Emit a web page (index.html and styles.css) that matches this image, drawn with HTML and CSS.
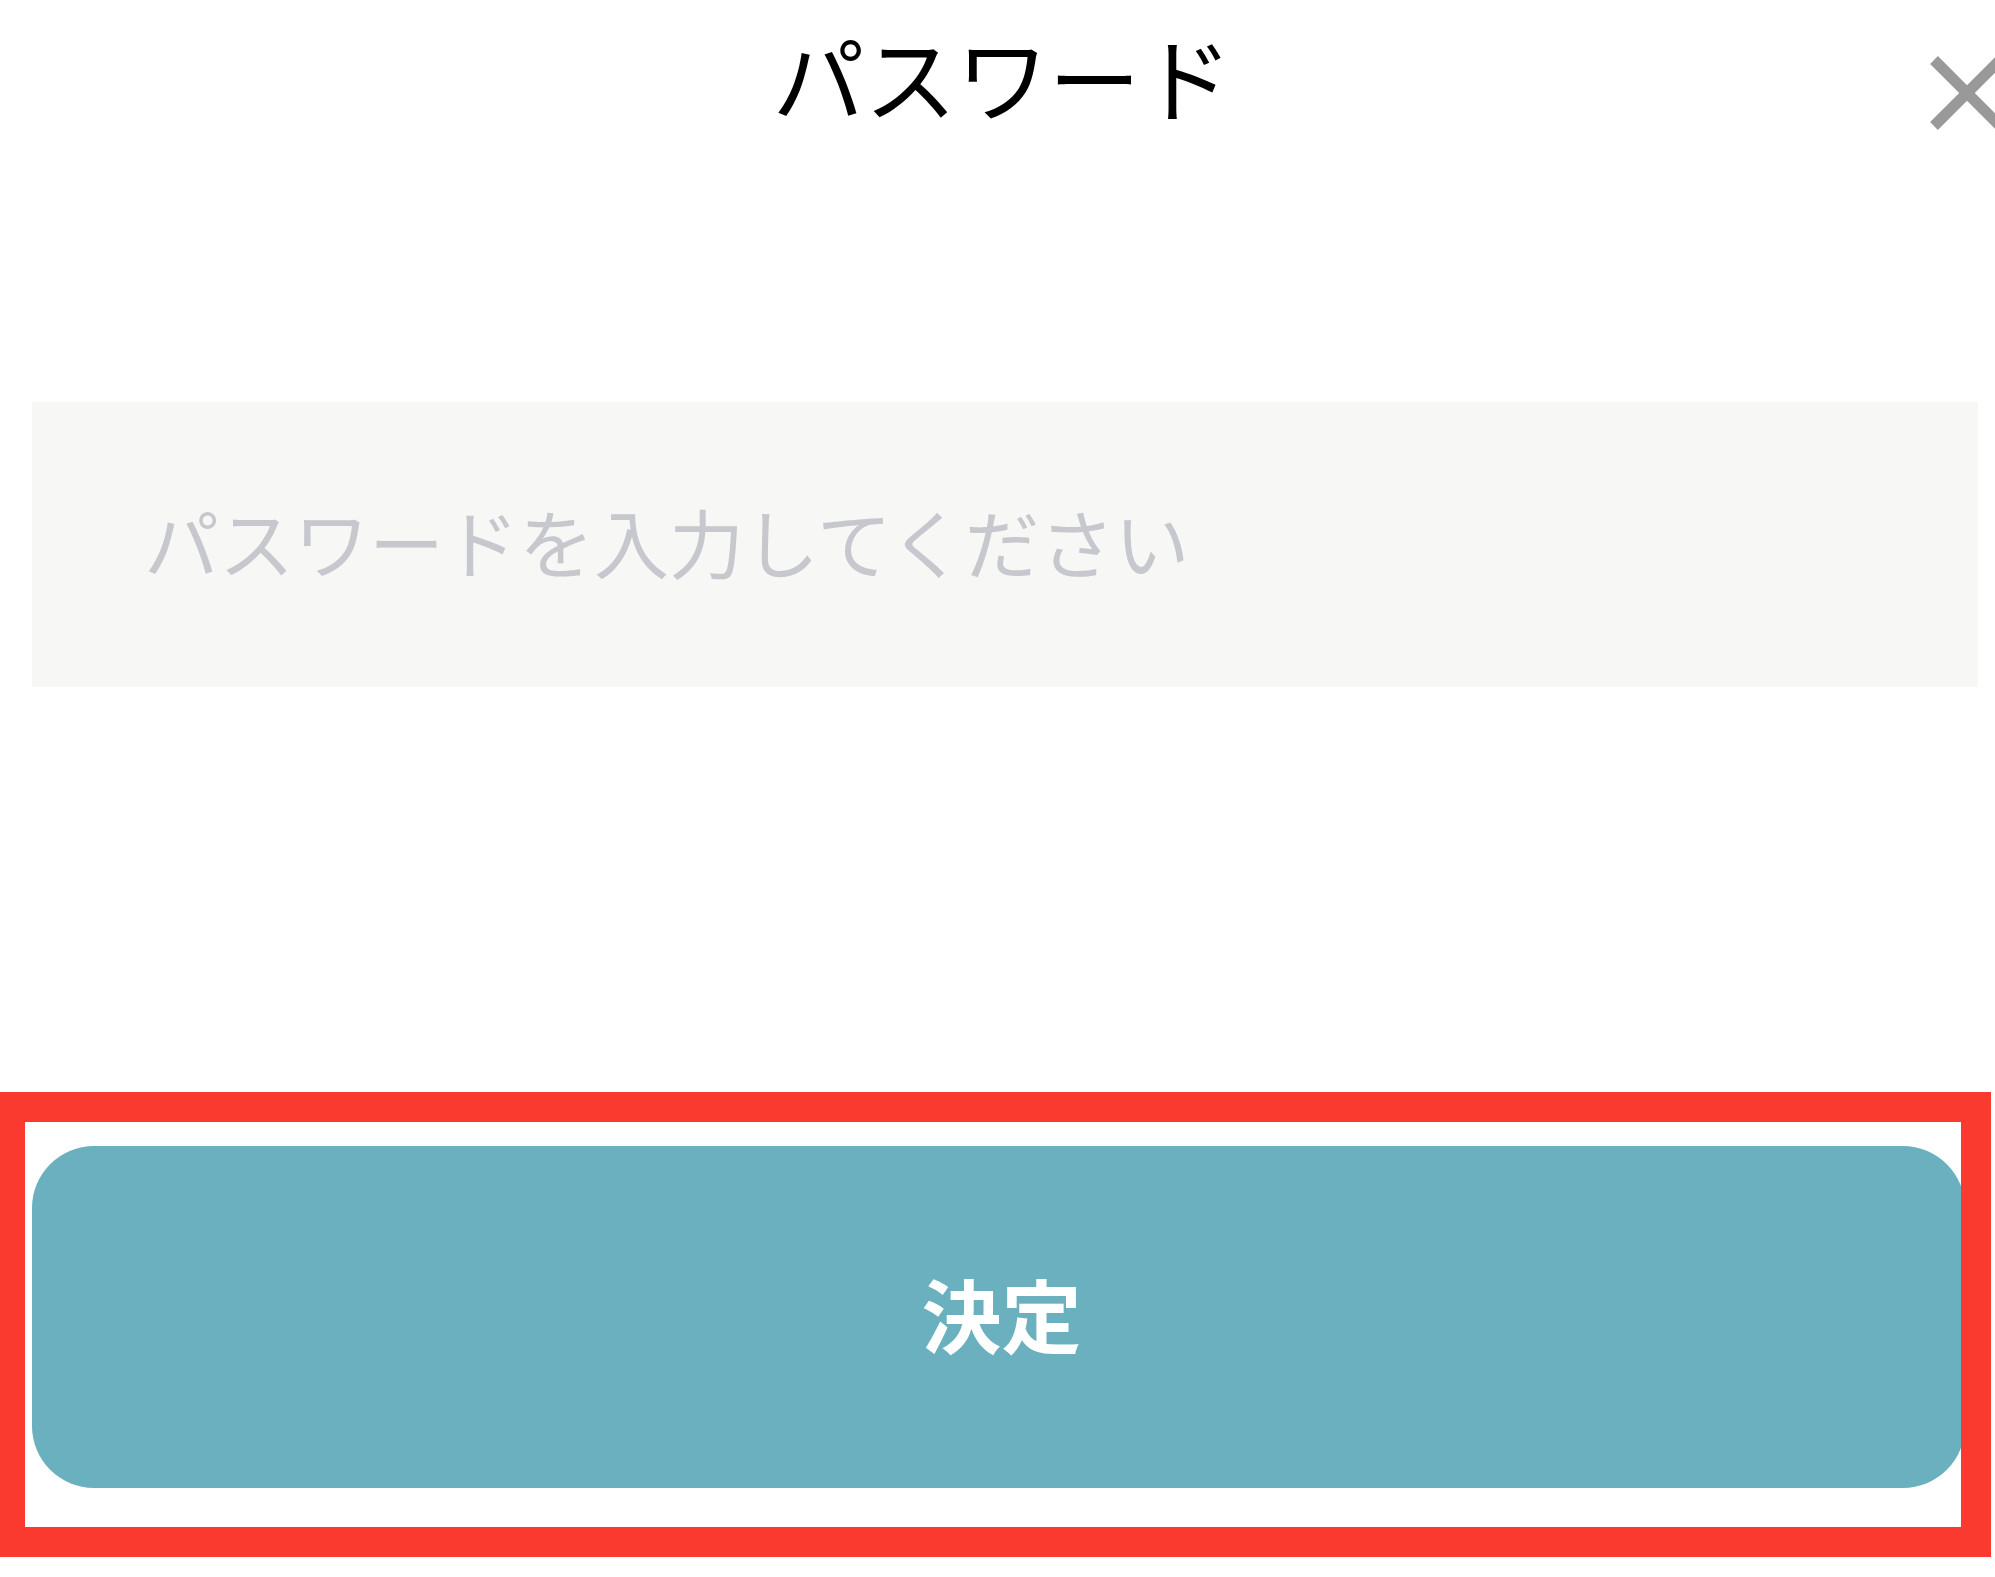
FILE: index.html
```html
<!DOCTYPE html>
<html lang="ja">
<head>
<meta charset="utf-8">
<title>パスワード</title>
<link rel="stylesheet" href="styles.css">
</head>
<body>
<div class="page">
  <header class="header">
    <h1 class="title">パスワード</h1>
    <button class="close" aria-label="閉じる">
      <svg width="76" height="76" viewBox="0 0 76 76">
        <path d="M5 5 L71 71 M71 5 L5 71" stroke="#999999" stroke-width="11" fill="none"/>
      </svg>
    </button>
  </header>
  <main class="main">
    <div class="field">
      <span class="placeholder">パスワードを入力してください</span>
    </div>
    <div class="action">
      <button class="submit">決定</button>
      <div class="highlight"></div>
    </div>
  </main>
</div>
</body>
</html>
```
FILE: styles.css
```css
html, body {
  margin: 0;
  padding: 0;
  background: #ffffff;
  overflow: hidden;
}
body {
  width: 1995px;
  height: 1577px;
  font-family: "Noto Sans CJK JP", "Noto Sans", sans-serif;
}
.page {
  position: relative;
  width: 1995px;
  height: 1577px;
}
.header {
  position: relative;
  height: 185px;
  display: flex;
  align-items: center;
  justify-content: center;
}
.title {
  margin: 0 0 36px 10px;
  font-size: 92px;
  font-weight: 400;
  color: #000000;
  line-height: 1;
  letter-spacing: 0;
}
.close {
  position: absolute;
  left: 1929px;
  top: 55px;
  width: 76px;
  height: 76px;
  padding: 0;
  border: 0;
  background: none;
  display: block;
}
.close svg {
  display: block;
}
.main {
  padding: 0 17px 0 32px;
}
.field {
  margin-top: 217px;
  height: 285px;
  box-sizing: border-box;
  background: #f7f7f5;
  display: flex;
  align-items: center;
  padding: 0 0 8px 112px;
}
.placeholder {
  font-size: 75px;
  color: #c6c8ce;
  line-height: 1;
}
.action {
  position: relative;
  margin-top: 459px;
  width: 1933px;
}
.submit {
  display: flex;
  align-items: center;
  justify-content: center;
  width: 1933px;
  height: 342px;
  border: 0;
  border-radius: 62px;
  background: #6ab0be;
  color: #ffffff;
  font-family: "Noto Sans CJK JP", "Noto Sans", sans-serif;
  font-size: 80px;
  font-weight: 700;
  padding: 0 0 10px 6px;
}
.highlight {
  position: absolute;
  left: -32px;
  top: -54px;
  width: 1991px;
  height: 465px;
  box-sizing: border-box;
  border-style: solid;
  border-color: #fb3a2f;
  border-width: 30px 30px 30px 25px;
  pointer-events: none;
}
```
